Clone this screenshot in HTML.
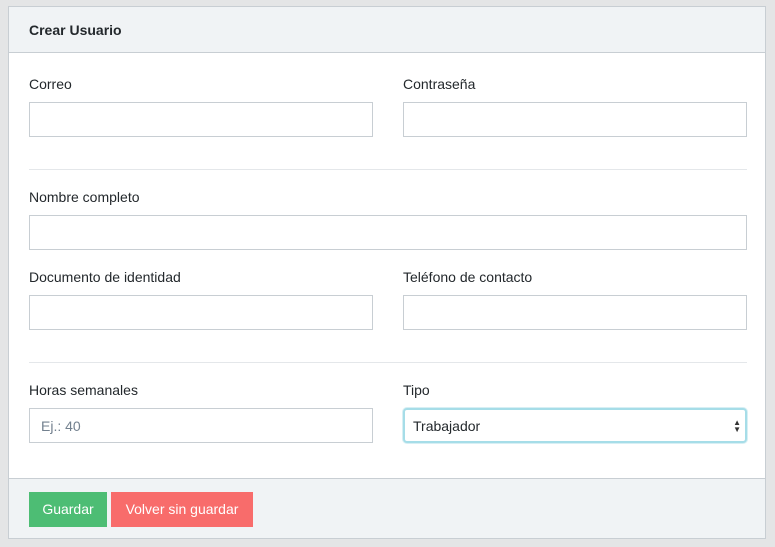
<!DOCTYPE html>
<html><head><style>
body{margin:0;width:775px;height:547px;background:#e4e5e6;font-family:"Liberation Sans",sans-serif;position:relative;overflow:hidden}
.card{position:absolute;left:8px;top:6px;width:758px;height:533px;background:#fff;border:1px solid #c8ced3;box-sizing:border-box}
.hdr{position:absolute;left:0;top:0;right:0;height:46px;background:#f0f3f5;border-bottom:1px solid #c8ced3;box-sizing:border-box}
.hdr span{position:absolute;left:20px;top:15px;font-size:14px;font-weight:bold;color:#23282c}
.ftr{position:absolute;left:0;bottom:0;right:0;height:60px;background:#f0f3f5;border-top:1px solid #c8ced3;box-sizing:border-box}
.l{position:absolute;font-size:14px;color:#23282c}
.i{position:absolute;height:35px;border:1px solid #c8ced3;box-sizing:border-box;background:#fff;font-size:14px;color:#5c6873;padding:10px 11px;line-height:14px}
.hr{position:absolute;left:29px;width:718px;height:1px;background:#e4e7ea}
.b{position:absolute;top:492px;height:35px;color:#fff;font-size:14px;line-height:35px;text-align:center}
</style></head><body>
<div class="card"><div class="hdr"><span>Crear Usuario</span></div><div class="ftr"></div></div>
<div class="l" style="left:29px;top:76px">Correo</div>
<div class="l" style="left:403px;top:76px">Contraseña</div>
<div class="i" style="left:29px;top:102px;width:344px"></div>
<div class="i" style="left:403px;top:102px;width:344px"></div>
<div class="hr" style="top:169px"></div>
<div class="l" style="left:29px;top:189px">Nombre completo</div>
<div class="i" style="left:29px;top:215px;width:718px"></div>
<div class="l" style="left:29px;top:269px">Documento de identidad</div>
<div class="l" style="left:403px;top:269px">Teléfono de contacto</div>
<div class="i" style="left:29px;top:295px;width:344px"></div>
<div class="i" style="left:403px;top:295px;width:344px"></div>
<div class="hr" style="top:362px"></div>
<div class="l" style="left:29px;top:382px">Horas semanales</div>
<div class="l" style="left:403px;top:382px">Tipo</div>
<div class="i" style="left:29px;top:408px;width:344px;color:#73818f">Ej.: 40</div>
<div class="i" style="left:403px;top:408px;width:344px;border:2px solid #a6dde8;border-radius:4px;color:#23282c;padding:9px 8px;box-shadow:0 0 0 1px #d7eff4">Trabajador<span style="position:absolute;right:4px;top:9px;font-size:8px;line-height:7px;color:#333">▲<br>▼</span></div>
<div class="b" style="left:29px;width:78px;background:#4dbd74">Guardar</div>
<div class="b" style="left:111px;width:142px;background:#f86c6b">Volver sin guardar</div>
</body></html>
